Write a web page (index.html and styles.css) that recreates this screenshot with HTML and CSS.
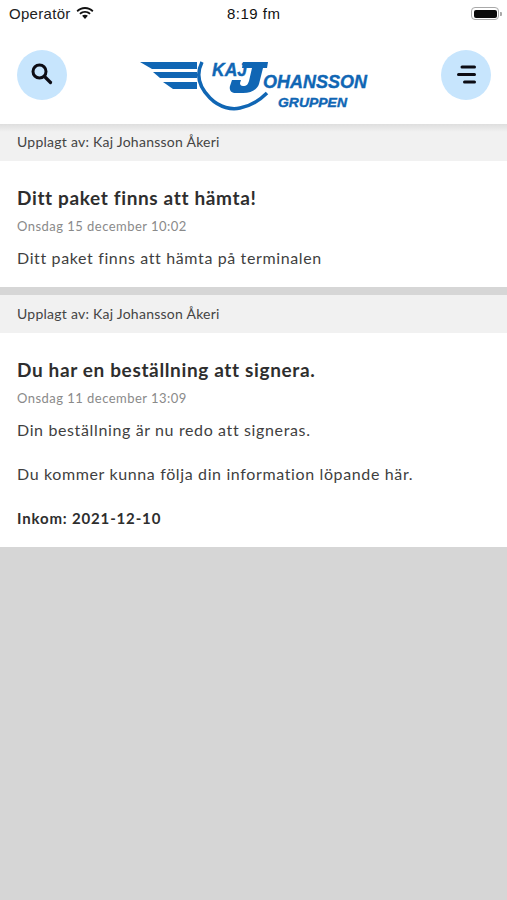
FILE: index.html
```html
<!DOCTYPE html>
<html lang="sv">
<head>
<meta charset="utf-8">
<title>Kaj Johansson</title>
<link rel="stylesheet" href="styles.css">
</head>
<body>
<div class="status">
  <div class="status-left">
    <span>Operatör</span>
    <svg class="wifi" width="18" height="13" viewBox="0 0 19 14"><path d="M9.500 2.200c3 0 5.700 1.100 7.800 3.100l1.300-1.500C16.100 1.400 13 0 9.500 0S2.900 1.400.4 3.800l1.300 1.500c2.100-2 4.800-3.100 7.800-3.100z M9.500 6.300c1.800 0 3.400.7 4.700 1.800l1.400-1.500c-1.700-1.500-3.800-2.400-6.100-2.400s-4.400.9-6.100 2.400l1.400 1.500c1.300-1.100 2.900-1.800 4.700-1.800z M9.500 8.300c-1.200 0-2.300.4-3.100 1.200l3.100 3.500 3.100-3.500c-.8-.8-1.900-1.200-3.100-1.200z" fill="#111"/></svg>
  </div>
  <span class="status-time">8:19 fm</span>
  <div class="battery"><div class="battery-body"><div class="battery-fill"></div></div><div class="battery-cap"></div></div>
</div>
<header class="nav">
  <button class="round" aria-label="Sök">
    <svg width="24" height="24" viewBox="0 0 24 24"><circle cx="9.500" cy="8.500" r="6.500" fill="none" stroke="#0c0c14" stroke-width="3"/><path d="M14.500 13.500l6 6" stroke="#0c0c14" stroke-width="3.200" stroke-linecap="round"/></svg>
  </button>
  <svg class="logo" width="240" height="58" viewBox="0 0 240 58">
    <g fill="#1066b4">
      <path d="M0 6h57v7H12z"/>
      <path d="M13 16h44v6H20z"/>
      <path d="M23 26h34v7H33z"/>
      <path d="M103 6H128L127 12H123L119 28C117 34 111 37 103 37H96C91 37 89 34 90 30L92 24H101L100 27C100 29 101 30 103 30C107 30 108 28 109 25L112 12H102Z"/>
      <text class="logo-kaj" x="72" y="20" textLength="35" lengthAdjust="spacingAndGlyphs">KAJ</text>
      <text class="logo-ohan" x="123" y="32" textLength="104" lengthAdjust="spacingAndGlyphs">OHANSSON</text>
      <text class="logo-grupp" x="138" y="51" textLength="69" lengthAdjust="spacingAndGlyphs">GRUPPEN</text>
    </g>
    <path d="M62 6C56 18 58 30 70 42C80 52 92 54 100 52C110 50 120 44 127 37" fill="none" stroke="#1066b4" stroke-width="3.500"/>
  </svg>
  <button class="round" aria-label="Meny">
    <svg width="24" height="24" viewBox="0 0 24 24"><path d="M8 4H20.500M4.500 11.500H20.500M10.500 19H20.500" stroke="#0c0c14" stroke-width="3" stroke-linecap="round"/></svg>
  </button>
</header>
<main class="feed">
  <article class="card first">
    <div class="byline">Upplagt av: Kaj Johansson Åkeri</div>
    <div class="content">
      <h2>Ditt paket finns att hämta!</h2>
      <div class="date">Onsdag 15 december 10:02</div>
      <p>Ditt paket finns att hämta på terminalen</p>
    </div>
  </article>
  <article class="card">
    <div class="byline">Upplagt av: Kaj Johansson Åkeri</div>
    <div class="content">
      <h2>Du har en beställning att signera.</h2>
      <div class="date">Onsdag 11 december 13:09</div>
      <p>Din beställning är nu redo att signeras.</p>
      <p class="gap">Du kommer kunna följa din information löpande här.</p>
      <p class="gap strong">Inkom: 2021-12-10</p>
    </div>
  </article>
</main>
</body>
</html>
```
FILE: styles.css
```css
* { box-sizing: border-box; }
html, body { margin: 0; height: 100%; }
body {
  display: flex;
  flex-direction: column;
  min-height: 900px;
  background: #d6d6d6;
  font-family: Lato, "Noto Sans", sans-serif;
  color: #333;
  overflow: hidden;
}
.status {
  height: 40px;
  flex: none;
  background: #fff;
  display: flex;
  align-items: center;
  justify-content: space-between;
  position: relative;
  padding: 0 5px 13px 9px;
  font-family: "Liberation Sans", sans-serif;
  font-size: 15px;
  letter-spacing: 0.3px;
  color: #222;
}
.status-left { display: flex; align-items: center; gap: 5px; }
.wifi { margin-top: -1px; }
.status-time {
  position: absolute;
  left: 227px;
  top: 5px;
  letter-spacing: 0.5px;
  color: #111;
}
.battery { display: flex; align-items: center; gap: 1px; }
.battery-body { width: 28px; height: 13px; border: 1.5px solid #a9a9a9; border-radius: 4px; padding: 1.5px; }
.battery-fill { width: 100%; height: 100%; background: #0a0a0a; border-radius: 2px; }
.battery-cap { width: 2px; height: 4px; background: #a9a9a9; border-radius: 0 1px 1px 0; }
.nav {
  height: 84px;
  flex: none;
  background: #fff;
  display: flex;
  align-items: flex-start;
  justify-content: space-between;
  padding: 10px 16px 0 17px;
}
.round {
  width: 50px;
  height: 50px;
  border: 0;
  padding: 0;
  border-radius: 50%;
  background: #c7e5fd;
  display: flex;
  align-items: center;
  justify-content: center;
}
.logo { margin-top: 6px; margin-left: 12px; flex: none; }
.logo text { stroke: #1066b4; stroke-width: 0.4px; }
.logo-kaj { font: italic 700 18px "Liberation Sans", sans-serif; }
.logo-ohan { font: italic 700 19px "Liberation Sans", sans-serif; }
.logo-grupp { font: italic 700 13px "Liberation Sans", sans-serif; }
.feed { display: flex; flex-direction: column; gap: 8px; }
.card { background: #fff; }
.byline {
  height: 38px;
  background: #f1f1f1;
  padding: 10px 17px 0;
  font-size: 14px;
  line-height: 18px;
  letter-spacing: 0.25px;
  color: #444;
}
.first .byline { background: linear-gradient(#dedede, #f1f1f1 8px); height: 37px; padding-top: 9px; }
.content { padding: 0 17px 18px; }
h2 {
  margin: 0;
  padding-top: 25px;
  font-size: 19px;
  line-height: 24px;
  font-weight: 700;
  letter-spacing: 0.64px;
  color: #2e2e2e;
}
.date {
  margin-top: 7px;
  font-size: 13px;
  line-height: 18px;
  letter-spacing: 0.47px;
  color: #8a8a8a;
}
p {
  margin: 12px 0 0;
  font-size: 16px;
  line-height: 22px;
  letter-spacing: 0.63px;
  color: #3f3f3f;
}
p.gap { margin-top: 22px; }
p.strong { font-weight: 700; font-size: 15px; letter-spacing: 0.84px; color: #2e2e2e; }
```
